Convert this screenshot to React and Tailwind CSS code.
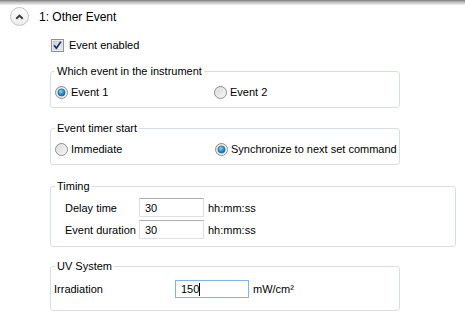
import React from "react";

function Radio({ checked }) {
  return (
    <svg width="13" height="13" viewBox="0 0 13 13" className="shrink-0">
      <defs>
        <linearGradient id="rbg" x1="0" y1="0" x2="1" y2="1">
          <stop offset="0" stopColor="#d4d4d4" />
          <stop offset="1" stopColor="#fbfbfb" />
        </linearGradient>
        <radialGradient id="rdot" cx="0.4" cy="0.35" r="0.7">
          <stop offset="0" stopColor="#8fd6ff" />
          <stop offset="0.5" stopColor="#2a9ad8" />
          <stop offset="1" stopColor="#115d8e" />
        </radialGradient>
      </defs>
      <circle cx="6.5" cy="6.5" r="6" fill="url(#rbg)" stroke="#8d8d8d" strokeWidth="1" />
      <circle cx="6.5" cy="6.5" r="4.6" fill="none" stroke="#eeeeee" strokeWidth="0.8" />
      {checked && <circle cx="6.5" cy="6.5" r="3.6" fill="url(#rdot)" stroke="#1c5b86" strokeWidth="0.6" />}
    </svg>
  );
}

function Checkbox() {
  return (
    <svg width="13" height="13" viewBox="0 0 13 13" className="shrink-0">
      <defs>
        <linearGradient id="cbg" x1="0" y1="0" x2="1" y2="1">
          <stop offset="0" stopColor="#c9cfd8" />
          <stop offset="1" stopColor="#f4f6f9" />
        </linearGradient>
      </defs>
      <rect x="0.5" y="0.5" width="12" height="12" fill="#ffffff" stroke="#8e8f8f" />
      <rect x="2" y="2" width="9" height="9" fill="url(#cbg)" stroke="#b3bac6" strokeWidth="0.6" />
      <path d="M3.2 6.3 L5.4 9.3 L9.9 2.6" fill="none" stroke="#1d2f72" strokeWidth="1.7" strokeLinejoin="round" />
    </svg>
  );
}

function Group({ title, width, children, className }) {
  return (
    <fieldset className={`border border-[#d5dfe5] rounded-[3px] p-0 ${width} ${className}`}>
      <legend className="ml-[4px] px-[2px] leading-[14px] text-[11px]">{title}</legend>
      {children}
    </fieldset>
  );
}

function TextBox({ value, width, focused, caret }) {
  return (
    <div
      className={`${width} flex items-center pl-[5px] bg-white border ${
        focused
          ? "border-[#7eb4ea] h-[18px]"
          : "border-[#dbdfe6] border-t-[#abadb3] h-[19px]"
      }`}
    >
      <span>{value}</span>
      {caret && <span className="w-px h-[13px] bg-black" />}
    </div>
  );
}

export default function App() {
  return (
    <div
      className="w-[467px] h-[327px] bg-white overflow-hidden text-[11px] text-black leading-[14px]"
      style={{ fontFamily: '"Liberation Sans", Arial, sans-serif' }}
    >
      <div className="h-[5px] w-[465px] bg-gradient-to-b from-[#7d7d7d] via-[#c4c4c4] to-[#f2f2f2]" />
      <div className="flex items-center h-[23px] pl-[10px]">
        <div className="w-[19px] h-[19px] rounded-full border border-[#c3c3c3] bg-gradient-to-b from-white to-[#ececec] flex items-center justify-center">
          <svg width="9" height="6" viewBox="0 0 9 6">
            <path d="M1.3 4.8 L4.5 1.6 L7.7 4.8" fill="none" stroke="#3c3c3c" strokeWidth="2" />
          </svg>
        </div>
        <span className="ml-[10px] text-[12px]">1: Other Event</span>
      </div>
      <div className="pl-[50px]">
        <div className="flex items-center h-[14px] mt-[10px] gap-[5px] pl-px">
          <Checkbox />
          <span>Event enabled</span>
        </div>
        <Group title="Which event in the instrument" width="w-[350px]" className="mt-[12px]">
          <div className="flex items-center pl-[4px] pt-[7px] pb-[8px] h-[29px]">
            <div className="w-[159px] flex items-center gap-[3px]">
              <Radio checked />
              <span>Event 1</span>
            </div>
            <div className="flex items-center gap-[3px]">
              <Radio />
              <span>Event 2</span>
            </div>
          </div>
        </Group>
        <Group title="Event timer start" width="w-[350px]" className="mt-[13px]">
          <div className="flex items-center pl-[4px] pt-[7px] pb-[8px] h-[29px]">
            <div className="w-[160px] flex items-center gap-[3px]">
              <Radio />
              <span>Immediate</span>
            </div>
            <div className="flex items-center gap-[3px]">
              <Radio checked />
              <span>Synchronize to next set command</span>
            </div>
          </div>
        </Group>
        <Group title="Timing" width="w-[406px]" className="mt-[14px]">
          <div className="flex flex-col gap-[3px] pl-[14px] pt-[5px] pb-[7px]">
            <div className="flex items-center">
              <span className="w-[74px]">Delay time</span>
              <TextBox value="30" width="w-[65px]" />
              <span className="ml-[4px]">hh:mm:ss</span>
            </div>
            <div className="flex items-center">
              <span className="w-[74px]">Event duration</span>
              <TextBox value="30" width="w-[65px]" />
              <span className="ml-[4px]">hh:mm:ss</span>
            </div>
          </div>
        </Group>
        <Group title="UV System" width="w-[350px]" className="mt-[12px]">
          <div className="flex items-center pl-[3px] pt-[7px] pb-[12px]">
            <span className="w-[121px]">Irradiation</span>
            <TextBox value="150" width="w-[74px]" focused caret />
            <span className="ml-[4px]">mW/cm²</span>
          </div>
        </Group>
      </div>
    </div>
  );
}
